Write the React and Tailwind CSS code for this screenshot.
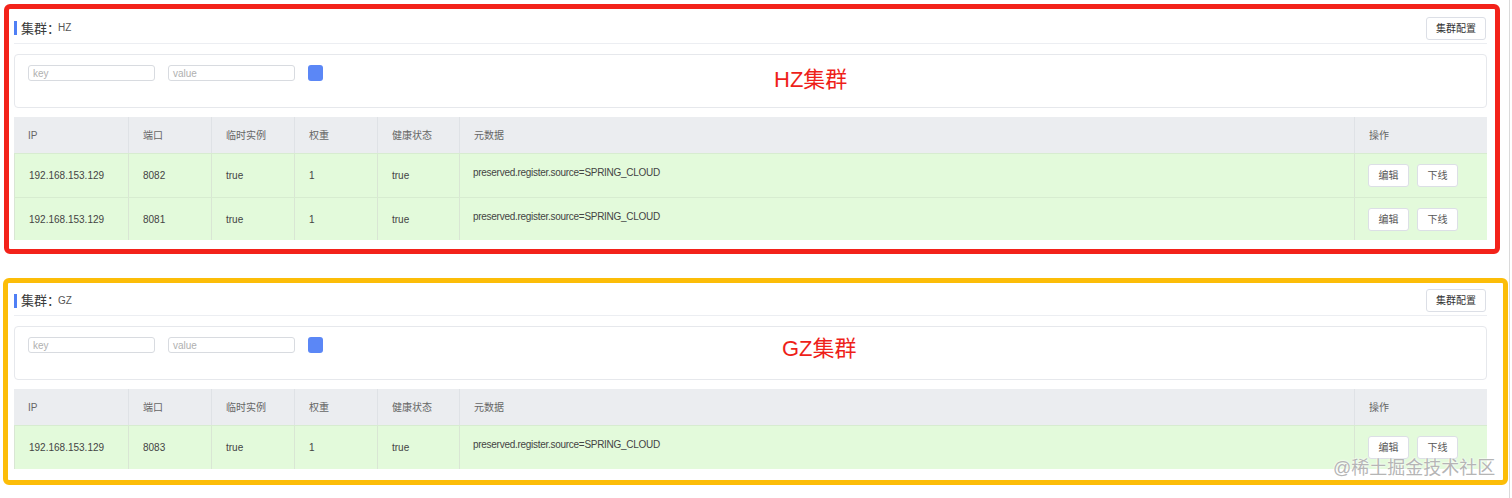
import React from "react";

const rowsHZ = [
  { ip: "192.168.153.129", port: "8082" },
  { ip: "192.168.153.129", port: "8081" },
];
const rowsGZ = [{ ip: "192.168.153.129", port: "8083" }];

const cols = "grid grid-cols-[114px_83px_83px_83px_82px_1fr_133px]";

function Btn({ children }) {
  return (
    <div className="w-[41px] h-[23px] flex items-center justify-center border border-[#dcdfe6] rounded-[3px] bg-white text-[10px] text-[#555]">
      {children}
    </div>
  );
}

function Card({ name, titleH, titlePt, filterMt, rows }) {
  return (
    <div className="flex flex-col">
      <div
        className={`flex items-center justify-between border-b border-[#eceef2] ${titleH} ${titlePt}`}
      >
        <div className="flex items-center">
          <div className="w-[3px] h-[14px] bg-[#4f7ff5] mr-[4px]" />
          <span className="text-[13px] text-[#3a3a3a] leading-none">集群：</span>
          <span className="text-[10px] text-[#555] leading-none ml-[-2px]">{name}</span>
        </div>
        <div className="w-[60px] h-[23px] flex items-center justify-center border border-[#dcdfe6] rounded-[3px] bg-white text-[10px] text-[#333] mr-[1px]">
          集群配置
        </div>
      </div>
      <div
        className={`${filterMt} h-[54px] border border-[#e6e8ec] rounded-[4px] bg-white flex items-start pt-[10px] pl-[13px] gap-[13px]`}
      >
        <div className="w-[127px] h-[16px] border border-[#d8dbe0] rounded-[3px] flex items-center pl-[4px] text-[10px] text-[#b0b0b0]">
          key
        </div>
        <div className="w-[127px] h-[16px] border border-[#d8dbe0] rounded-[3px] flex items-center pl-[4px] text-[10px] text-[#b0b0b0]">
          value
        </div>
        <div className="w-[15px] h-[16px] rounded-[3px] bg-[#5b87f6]" />
      </div>
      <div className="mt-[9px] flex flex-col text-[10px]">
        <div className={`${cols} h-[36px] bg-[#ebedf0] text-[#666]`}>
          {["IP", "端口", "临时实例", "权重", "健康状态", "元数据", "操作"].map((h, i) => (
            <div
              key={h}
              className={`flex items-center pl-[14px] ${i > 0 ? "border-l border-[#dfe2e6]" : ""}`}
            >
              {h}
            </div>
          ))}
        </div>
        {rows.map((r, idx) => (
          <div
            key={idx}
            className={`${cols} ${idx === rows.length - 1 && rows.length > 1 ? "h-[43px]" : "h-[44px]"} bg-[#e3fadb] text-[#444] border-t border-[#d7ecd0]`}
          >
            <div className="flex items-center pl-[14px] border-l border-[#d9e6d4]">{r.ip}</div>
            <div className="flex items-center pl-[14px] border-l border-[#d9e6d4]">{r.port}</div>
            <div className="flex items-center pl-[14px] border-l border-[#d9e6d4]">true</div>
            <div className="flex items-center pl-[14px] border-l border-[#d9e6d4]">1</div>
            <div className="flex items-center pl-[14px] border-l border-[#d9e6d4]">true</div>
            <div className="flex items-start pt-[11px] pl-[13px] border-l border-[#d9e6d4] tracking-[-0.28px]">
              preserved.register.source=SPRING_CLOUD
            </div>
            <div className="flex items-center pl-[13px] gap-[8px] border-l border-[#d9e6d4]">
              <Btn>编辑</Btn>
              <Btn>下线</Btn>
            </div>
          </div>
        ))}
      </div>
    </div>
  );
}

export default function App() {
  return (
    <div
      className="relative w-[1510px] h-[498px] bg-white border-r border-[#dadada] overflow-hidden"
      style={{ fontFamily: '"Liberation Sans", "Noto Sans CJK SC", sans-serif' }}
    >
      <div className="flex flex-col pt-[4px]">
        <div className="ml-[4px] w-[1496px] border-[5px] border-[#f3221a] rounded-[6px] pl-[5px] pr-[8px] pb-[9px]">
          <Card name="HZ" titleH="h-[35px]" titlePt="pt-[4px]" filterMt="mt-[10px]" rows={rowsHZ} />
        </div>
        <div className="mt-[24px] ml-[3px] w-[1505px] border-[5px] border-[#fcbd08] rounded-[6px] pl-[6px] pr-[16px] pb-[11px]">
          <Card name="GZ" titleH="h-[33px]" titlePt="pt-[3px]" filterMt="mt-[10px]" rows={rowsGZ} />
        </div>
      </div>
      <div className="absolute left-[774px] top-[69px] text-[22px] leading-none text-[#ee1f1a]">HZ集群</div>
      <div className="absolute left-[782px] top-[338px] text-[22px] leading-none text-[#ee1f1a]">GZ集群</div>
      <div
        className="absolute left-[1333px] top-[459px] text-[18px] leading-none text-[#b5b5b5]"
        style={{ textShadow: "0 0 2px #fff, 0 0 2px #fff" }}
      >
        @稀土掘金技术社区
      </div>
    </div>
  );
}
